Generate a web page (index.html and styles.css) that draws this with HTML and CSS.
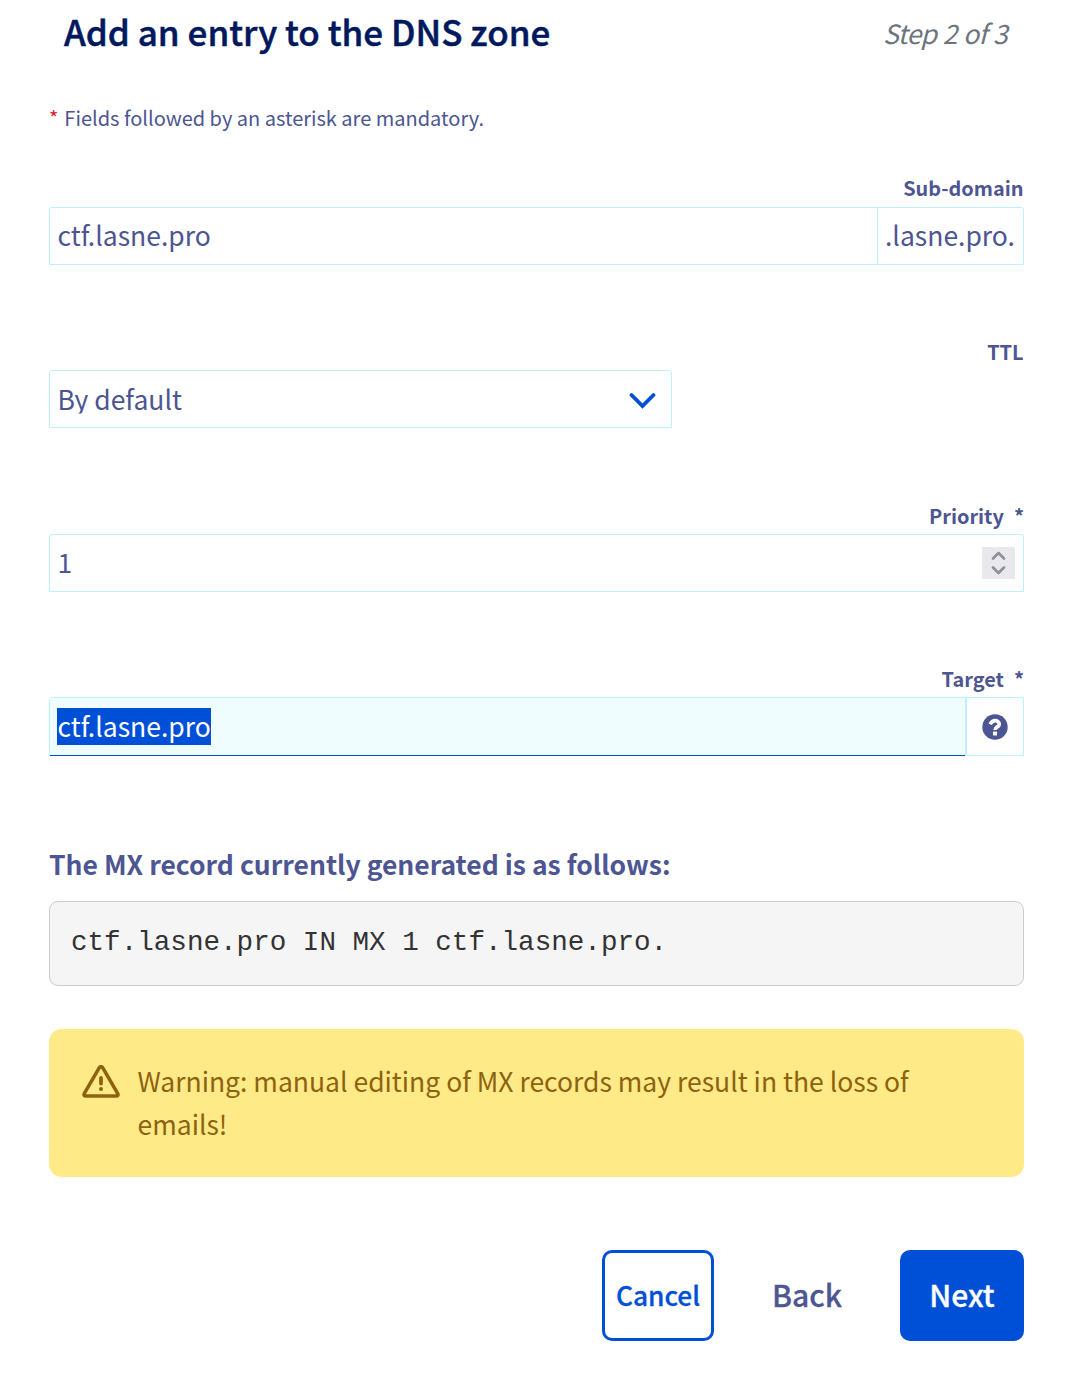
FILE: index.html
```html
<!DOCTYPE html>
<html lang="en">
<head>
<meta charset="utf-8">
<title>Add an entry to the DNS zone</title>
<link rel="stylesheet" href="styles.css">
</head>
<body>
<form class="dialog">
  <header class="header">
    <h1 class="title">Add an entry to the DNS zone</h1>
    <span class="step">Step 2 of 3</span>
  </header>
  <p class="hint"><span class="req">*</span>Fields followed by an asterisk are mandatory.</p>
  <div class="field">
    <div class="label label-high"><span>Sub-domain</span></div>
    <div class="group"><div class="value"><span>ctf.lasne.pro</span></div><div class="addon"><span>.lasne.pro.</span></div></div>
  </div>
  <div class="field field-ttl">
    <div class="label label-high"><span>TTL</span></div>
    <div class="group select"><div class="value"><span>By default</span></div>
      <svg class="chevron" width="28" height="18" viewBox="0 0 28 18"><path d="M3.500 3l11 11 11-11" fill="none" stroke="#0050d7" stroke-width="3.800" stroke-linecap="round" stroke-linejoin="miter"/></svg>
    </div>
  </div>
  <div class="field">
    <div class="label"><span>Priority</span><span>*</span></div>
    <div class="group"><div class="value"><span>1</span></div>
      <div class="spinner"><svg width="33" height="32" viewBox="0 0 33 32"><path d="M11 11.500l5.500-5.500 5.500 5.500M11 20.500l5.500 5.500 5.500-5.500" fill="none" stroke="#8f8f9d" stroke-width="2.700" stroke-linecap="round" stroke-linejoin="round"/></svg></div>
    </div>
  </div>
  <div class="field">
    <div class="label"><span>Target</span><span>*</span></div>
    <div class="group group-target"><div class="value focused"><span class="selected">ctf.lasne.pro</span></div>
      <div class="help"><svg width="26" height="26" viewBox="0 0 512 512"><circle cx="256" cy="256" r="250" fill="#4d5592"/><path d="M160 202C188 150 216 130 258 130C300 130 340 158 340 200C340 258 256 250 256 316" fill="none" stroke="#fff" stroke-width="72"/><rect x="216" y="344" width="80" height="80" rx="12" fill="#fff"/></svg></div>
    </div>
  </div>
  <h2 class="subtitle">The MX record currently generated is as follows:</h2>
  <pre class="record">ctf.lasne.pro IN MX 1 ctf.lasne.pro.</pre>
  <div class="warning">
    <svg class="warn-icon" width="38" height="33" viewBox="0 0 38 33"><path d="M17.200 2.800L2.500 28.200Q1 31 4 31H34Q37 31 35.500 28.200L20.800 2.800Q19 0.500 17.200 2.800Z" fill="none" stroke="#8d6210" stroke-width="3.500" stroke-linejoin="round"/><path d="M19 13v5.500" stroke="#8d6210" stroke-width="3.800" stroke-linecap="round"/><circle cx="19" cy="24" r="2" fill="#8d6210"/></svg>
    <p class="warn-text">Warning: manual editing of MX records may result in the loss of emails!</p>
  </div>
  <footer class="actions">
    <button type="button" class="btn cancel">Cancel</button>
    <button type="button" class="btn back">Back</button>
    <button type="button" class="btn next">Next</button>
  </footer>
</form>
</body>
</html>
```
FILE: styles.css
```css
* { box-sizing: border-box; }
body { margin: 0; background: #fff; color: #4d5592; font-family: "Noto Sans CJK SC", "Open Sans", sans-serif; }
.dialog { width: 1075px; height: 1374px; padding: 0 51px 0 49px; overflow: hidden; }
.header { display: flex; justify-content: space-between; height: 68px; padding: 0 15px; }
.title { margin: 0; font-size: 35px; line-height: 62px; font-weight: 500; color: #00185e; white-space: nowrap; -webkit-text-stroke: 0.5px #00185e; }
.step { margin-right: 2px; font-size: 26.500px; line-height: 66px; letter-spacing: -0.6px; word-spacing: 1px; font-style: italic; color: #6c757d; white-space: nowrap; }
.hint { display: flex; gap: 6px; height: 30px; margin: 35px 0 0; font-size: 20px; line-height: 30px; }
.req { color: #d8232f; }
.field { height: 163.500px; }
.hint + .field { margin-top: 40px; }
.field:nth-of-type(3) { height: 163px; }
.label { display: flex; justify-content: flex-end; gap: 10px; height: 34px; font-size: 19.900px; line-height: 31px; font-weight: 700; }
.label-high { line-height: 29px; padding-right: 0.500px; }
.group { display: flex; align-items: center; width: 975px; height: 58px; border: 1px solid #bef1ff; border-radius: 3px 3px 0 0; font-size: 26.500px; line-height: 54px; }
.value { flex: 1; padding-left: 7.500px; height: 56px; white-space: nowrap; }
.addon { width: 146px; height: 56px; padding-left: 7px; border-left: 1px solid #bef1ff; white-space: nowrap; }
.select { width: 623px; line-height: 55px; }
.select .value { clip-path: inset(0 0 13px 0); }
.field-ttl .group { margin-top: -1px; }
.chevron { margin: 5px 15px 0 0; }
.spinner { display: flex; width: 33px; height: 32px; margin-right: 8px; background: #e9e9ed; }
.group-target { height: 59px; border-bottom: 0; }
.focused { height: 58px; padding-left: 7px; background: #effdff; border-bottom: 1px solid #0050d7; line-height: 57px; }
.selected { display: inline-block; height: 37px; margin-top: 10px; padding-left: 0.500px; padding-right: 0.500px; line-height: 36px; vertical-align: top; background: #0050d7; color: #fff; }
.help { display: flex; align-items: center; width: 58px; height: 58px; padding-left: 14.500px; border-left: 2px solid #bef1ff; border-bottom: 1px solid #bef1ff; }
.subtitle { margin: 17px 0 0; font-size: 26.500px; line-height: 40px; font-weight: 700; }
.record { height: 85px; margin: 17px 0 0; padding: 0 21px; border: 1px solid #ccc; border-radius: 9px; background: #f5f5f5; color: #333; font: 27.600px/82px "Liberation Mono", monospace; }
.warning { display: flex; gap: 17.500px; height: 148px; margin-top: 43px; padding: 30px 33px; border-radius: 13px; background: #ffea88; color: #8d6210; }
.warn-icon { flex: none; margin-top: 6px; }
.warn-text { margin: 0; font-size: 26.500px; line-height: 43px; }
.actions { display: flex; justify-content: flex-end; margin-top: 73px; height: 91px; }
.btn { padding: 0 0 2px; border: 0; border-radius: 10px; background: none; font-family: inherit; font-weight: 500; -webkit-text-stroke: 0.3px currentColor; }
.cancel { width: 112px; border: 3px solid #0050d7; color: #0050d7; font-size: 26.300px; }
.back { width: 186px; color: #4d5592; font-size: 30px; }
.next { width: 124px; background: #0050d7; color: #fff; font-size: 30px; }
```
